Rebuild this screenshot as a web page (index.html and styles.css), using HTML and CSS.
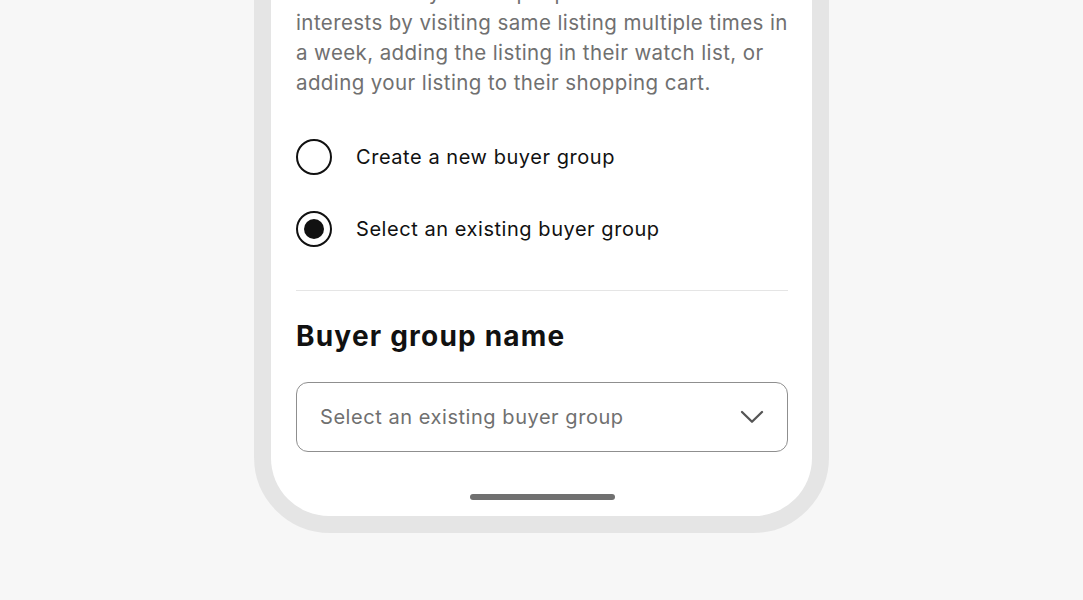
FILE: index.html
```html
<!DOCTYPE html>
<html lang="en">
<head>
<meta charset="utf-8">
<title>Buyer group</title>
<link rel="stylesheet" href="styles.css">
</head>
<body>
<div class="stage">
  <div class="phone">
    <div class="screen">
      <p class="desc">Interested buyers are people who show their interests by visiting same listing multiple times in a week, adding the listing in their watch list, or adding your listing to their shopping cart.</p>
      <div class="radios">
        <label class="option">
          <span class="radio"></span>
          <span class="option-label">Create a new buyer group</span>
        </label>
        <label class="option">
          <span class="radio checked"><span class="dot"></span></span>
          <span class="option-label">Select an existing buyer group</span>
        </label>
      </div>
      <hr class="divider">
      <h2 class="heading">Buyer group name</h2>
      <div class="select">
        <span class="placeholder">Select an existing buyer group</span>
        <svg class="chevron" width="24" height="14" viewBox="0 0 24 14" aria-hidden="true">
          <path d="M2 2 L12 11.8 L22 2" fill="none" stroke="#555555" stroke-width="2.3" stroke-linecap="round" stroke-linejoin="round"/>
        </svg>
      </div>
      <div class="home-indicator"></div>
    </div>
  </div>
</div>
</body>
</html>
```

FILE: styles.css
```css
html, body {
  margin: 0;
  padding: 0;
  background: #f7f7f7;
  overflow: hidden;
}

body {
  font-family: "Inter", "Liberation Sans", sans-serif;
  color: #111111;
}

.stage {
  width: 1083px;
  height: 600px;
  display: flex;
  justify-content: center;
  align-items: flex-start;
}

.phone {
  margin-top: -59px;
  width: 575px;
  box-sizing: border-box;
  border: 17px solid #e5e5e5;
  border-radius: 0 0 76px 76px;
  background: #e5e5e5;
}

.screen {
  background: #ffffff;
  border-radius: 0 0 58px 58px;
  padding: 20px 24px 16px 25px;
  display: flex;
  flex-direction: column;
}

.desc {
  margin: 0;
  font-size: 20.5px;
  line-height: 30px;
  color: #707070;
  letter-spacing: 0.4px;
}

.radios {
  margin-top: 41px;
  display: flex;
  flex-direction: column;
  gap: 36px;
}

.option {
  display: flex;
  align-items: center;
  height: 36px;
  gap: 24px;
}

.radio {
  width: 36px;
  height: 36px;
  box-sizing: border-box;
  border: 2px solid #111111;
  border-radius: 50%;
  display: flex;
  align-items: center;
  justify-content: center;
  flex: none;
}

.dot {
  width: 20px;
  height: 20px;
  border-radius: 50%;
  background: #111111;
}

.option-label {
  font-size: 20px;
  color: #111111;
  letter-spacing: 0.55px;
}

.divider {
  margin: 43px 0 0;
  border: 0;
  border-top: 1px solid #e5e5e5;
  height: 0;
}

.heading {
  margin: 27px 0 0;
  font-size: 28px;
  line-height: 36px;
  font-weight: 700;
  letter-spacing: 1.2px;
  color: #111111;
}

.select {
  margin-top: 28px;
  height: 70px;
  box-sizing: border-box;
  border: 1px solid #8f8f8f;
  border-radius: 12px;
  display: flex;
  align-items: center;
  justify-content: space-between;
  padding: 0 23px 0 23px;
}

.placeholder {
  font-size: 20px;
  color: #707070;
  letter-spacing: 0.55px;
}

.chevron {
  display: block;
}

.home-indicator {
  margin: 42px auto 0;
  width: 145px;
  height: 6px;
  border-radius: 3px;
  background: #707070;
}
```
